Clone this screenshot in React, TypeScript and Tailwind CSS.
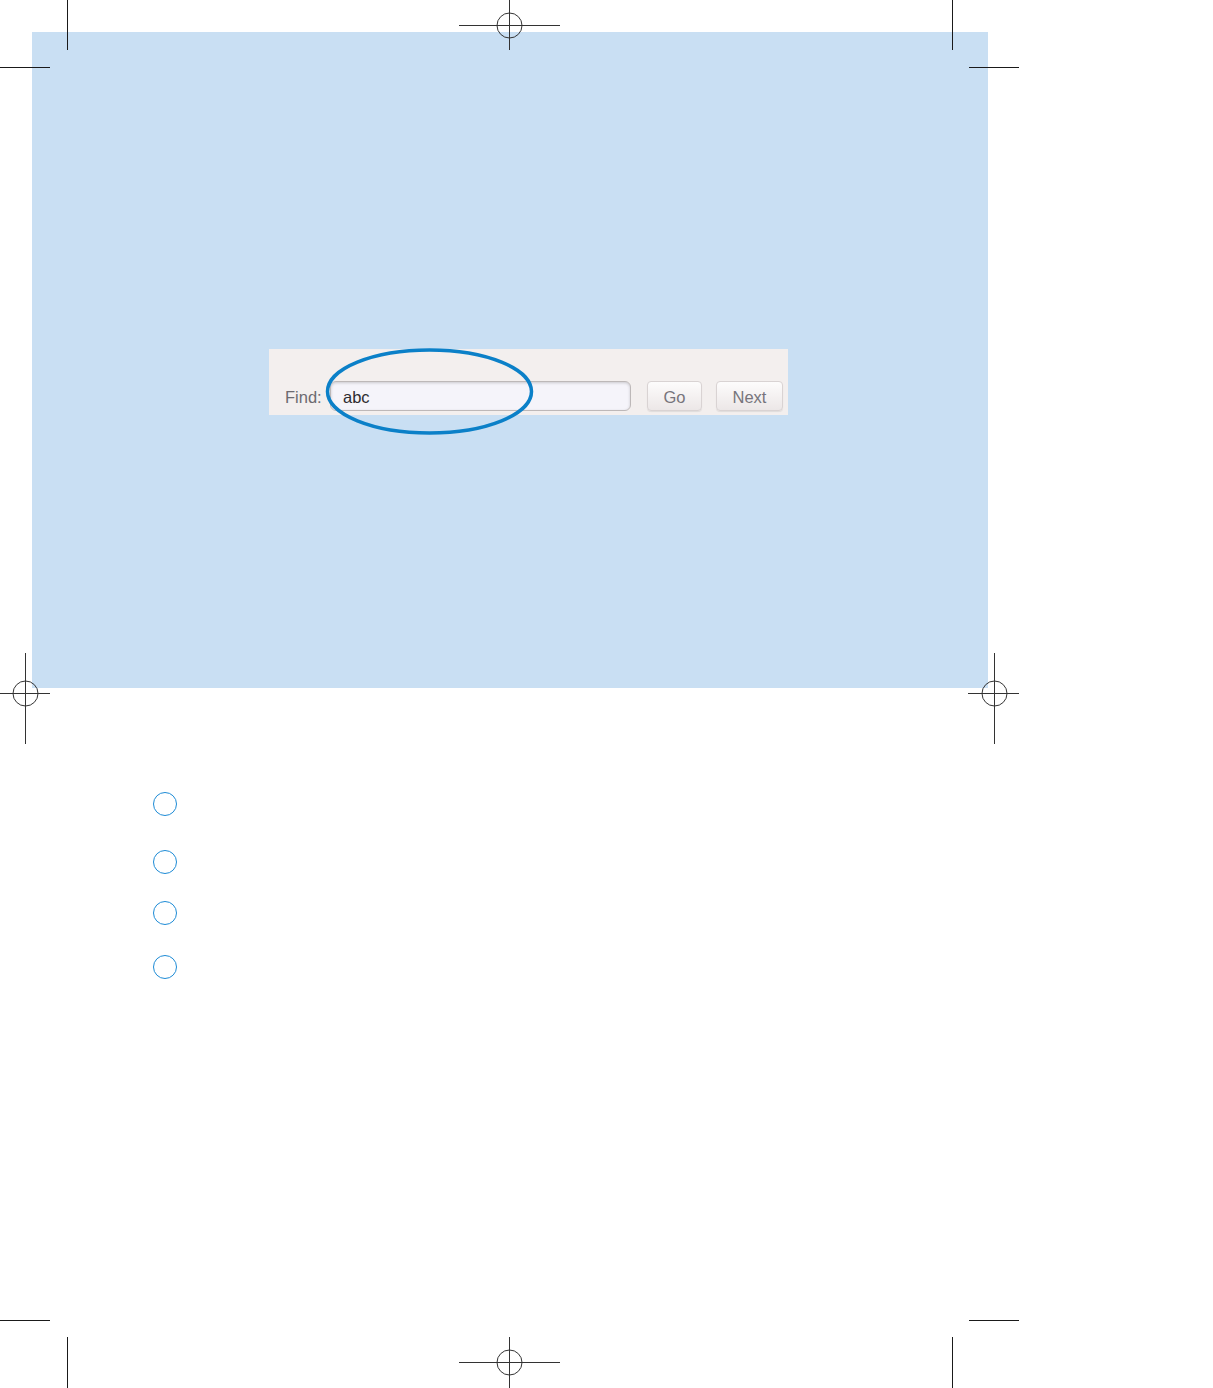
// Print proof page: find bar highlight with crop marks
const cropColor = '#1a1a1a';

function RegMark({cx, cy, h, v}: {cx: number; cy: number; h: [number, number]; v: [number, number]}) {
    return (
        <g stroke="#333" strokeWidth={1} fill="none">
            <line x1={h[0]} y1={cy} x2={h[1]} y2={cy}/>
            <line x1={cx} y1={v[0]} x2={cx} y2={v[1]}/>
            <circle cx={cx} cy={cy} r={12.5}/>
        </g>
    );
}

function CropMarks() {
    return (
        <svg
            className="absolute inset-0 z-10 pointer-events-none"
            width={1213}
            height={1388}
            viewBox="0 0 1213 1388"
        >
            <g stroke={cropColor} strokeWidth={1}>
                {/* top */}
                <line x1={67.5} y1={0} x2={67.5} y2={50}/>
                <line x1={0} y1={67.5} x2={50} y2={67.5}/>
                <line x1={952.5} y1={0} x2={952.5} y2={50}/>
                <line x1={969} y1={67.5} x2={1019} y2={67.5}/>
                {/* bottom */}
                <line x1={0} y1={1320.5} x2={50} y2={1320.5}/>
                <line x1={67.5} y1={1337} x2={67.5} y2={1388}/>
                <line x1={969} y1={1320.5} x2={1019} y2={1320.5}/>
                <line x1={952.5} y1={1337} x2={952.5} y2={1388}/>
            </g>
            <RegMark cx={509.5} cy={25.5} h={[459, 560]} v={[0, 50]}/>
            <RegMark cx={25.5} cy={693.5} h={[0, 50]} v={[653, 744]}/>
            <RegMark cx={994.5} cy={693.5} h={[968, 1019]} v={[653, 744]}/>
            <RegMark cx={509.5} cy={1362.5} h={[459, 560]} v={[1337, 1388]}/>
        </svg>
    );
}

function FindBar() {
    return (
        <div
            className="relative w-[519px] h-[66px] bg-[#f3efee] flex items-start pt-[32px] pl-[16px] text-[16.5px] leading-none"
            style={{fontFamily: '"Liberation Sans", Arial, sans-serif'}}
        >
            <span className="text-[#6c6a70] mt-[8px] w-[45px]">Find:</span>
            <div className="w-[301px] h-[30px] rounded-[6px] border border-[#bdb8b8] bg-[#f5f4fa] shadow-[inset_0_1px_3px_rgba(0,0,0,0.18)] flex items-center pl-[12px] pt-[3px] text-[#2e2c30]">
                abc
            </div>
            <button className="ml-[16px] w-[55px] h-[30px] pt-[3px] rounded-[4px] border border-[#d9d3d3] bg-gradient-to-b from-[#fdfcfc] to-[#ece7e7] text-[#77757c] shadow-[0_1px_1px_rgba(0,0,0,0.08)]">
                Go
            </button>
            <button className="ml-[14px] w-[67px] h-[30px] pt-[3px] rounded-[4px] border border-[#d9d3d3] bg-gradient-to-b from-[#fdfcfc] to-[#ece7e7] text-[#77757c] shadow-[0_1px_1px_rgba(0,0,0,0.08)]">
                Next
            </button>
            <svg
                className="absolute left-[55px] top-[-3px] pointer-events-none"
                width={212}
                height={92}
                viewBox="0 0 212 92"
            >
                <ellipse cx={105.5} cy={45.5} rx={102} ry={41.5} fill="none" stroke="#0b80c8" strokeWidth={3.5}/>
            </svg>
        </div>
    );
}

function StepCircle() {
    return <div className="w-[24px] h-[24px] rounded-full border-[1.5px] border-[#1d8bd6]"/>;
}

export default function App() {
    return (
        <div className="relative w-[1213px] h-[1388px] bg-white overflow-hidden">
            <CropMarks/>
            <div className="pt-[32px] pl-[32px]">
                <div className="w-[956px] h-[656px] bg-[#c9dff3] pt-[317px] pl-[237px]">
                    <FindBar/>
                </div>
            </div>
            <div className="pl-[153px] mt-[104px] flex flex-col">
                <StepCircle/>
                <div className="mt-[34px]"><StepCircle/></div>
                <div className="mt-[27px]"><StepCircle/></div>
                <div className="mt-[30px]"><StepCircle/></div>
            </div>
        </div>
    );
}
